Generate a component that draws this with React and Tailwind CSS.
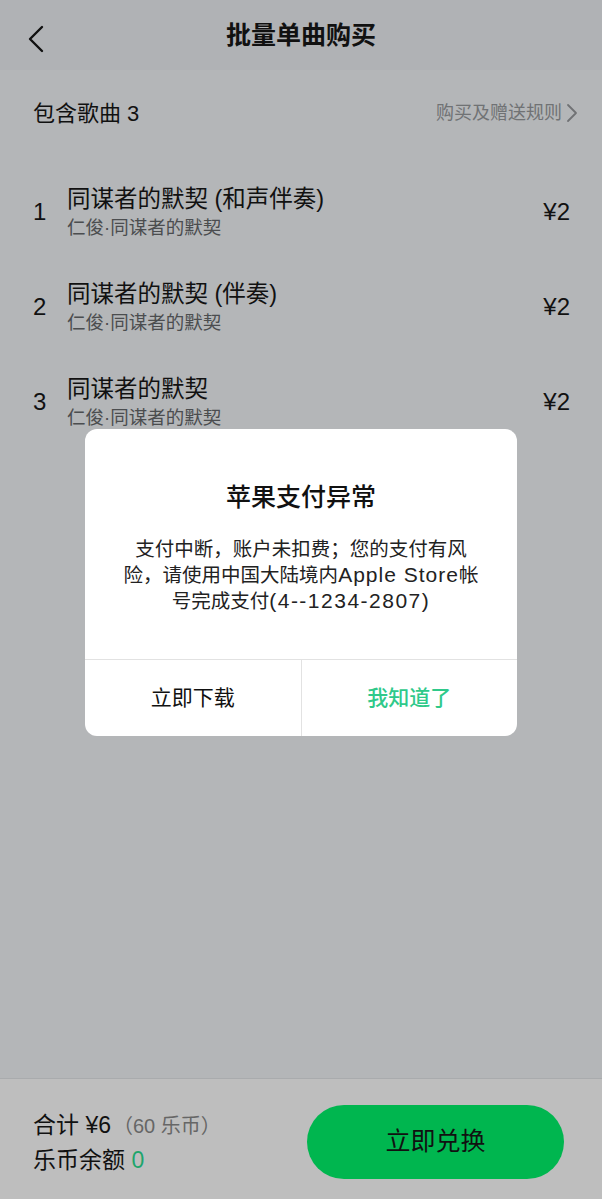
const font = { fontFamily: '"Liberation Sans", "Noto Sans CJK SC", sans-serif' }

const songs = [
  { no: 1, title: '同谋者的默契 (和声伴奏)', sub: '仁俊·同谋者的默契' },
  { no: 2, title: '同谋者的默契 (伴奏)', sub: '仁俊·同谋者的默契' },
  { no: 3, title: '同谋者的默契', sub: '仁俊·同谋者的默契' },
]

function SongRow({ song }) {
  return (
    <div className="flex h-[95px] items-center pl-[33px] pr-[32px]">
      <div className="w-[34px] text-[24px] leading-none text-[#111]">{song.no}</div>
      <div className="flex flex-1 flex-col">
        <div className="text-[23.5px] leading-[30px] text-[#111]">{song.title}</div>
        <div className="mt-[2px] text-[18.5px] leading-[24px] text-[#4b4d4f]">{song.sub}</div>
      </div>
      <div className="text-[24px] leading-none text-[#111]">¥2</div>
    </div>
  )
}

export default function App() {
  return (
    <div style={font} className="relative flex h-[1199px] w-[602px] flex-col overflow-hidden bg-[#b4b6b8]">
      <header className="relative flex h-[70px] items-center justify-center bg-[#b0b2b5]">
        <svg className="absolute left-[27px] top-[25px]" width="18" height="28" viewBox="0 0 18 28" fill="none">
          <path d="M15 2 L3 14 L15 26" stroke="#111" strokeWidth="2.4" strokeLinecap="round" strokeLinejoin="round" />
        </svg>
        <h1 className="text-[25px] font-bold leading-none text-[#111]">批量单曲购买</h1>
      </header>

      <main className="flex-1">
        <div className="flex h-[86px] items-center justify-between pl-[33px] pr-[24px]">
          <div className="text-[22px] text-[#111]">包含歌曲 3</div>
          <div className="flex items-center gap-[4px] text-[18px] text-[#707274]">
            购买及赠送规则
            <svg width="12" height="20" viewBox="0 0 12 20" fill="none">
              <path d="M2 2 L10 10 L2 18" stroke="#707274" strokeWidth="1.8" strokeLinecap="round" strokeLinejoin="round" />
            </svg>
          </div>
        </div>
        <div className="mt-[8px]">
          {songs.map((s) => (
            <SongRow key={s.no} song={s} />
          ))}
        </div>
      </main>

      <footer className="flex h-[121px] items-center justify-between border-t border-[#a9abad] bg-[#bebebe] pl-[33px] pr-[38px] pt-[6px]">
        <div className="flex flex-col gap-[4px]">
          <div className="flex items-baseline text-[23px] leading-[30px] text-[#111]">
            合计 ¥6
            <span className="ml-[2px] text-[20px] text-[#666]">（60 乐币）</span>
          </div>
          <div className="text-[23px] leading-[30px] text-[#111]">
            乐币余额 <span className="text-[#1ea56c]">0</span>
          </div>
        </div>
        <button className="flex h-[74px] w-[257px] items-center justify-center rounded-full bg-[#00b64f] text-[25px] text-[#111]">
          立即兑换
        </button>
      </footer>

      <div className="absolute left-[85px] top-[429px] w-[432px] overflow-hidden rounded-[12px] bg-white">
        <div className="flex h-[230px] flex-col items-center pt-[52px]">
          <div className="text-[25px] font-medium leading-[32px] text-[#111]">苹果支付异常</div>
          <p className="mt-[23px] text-center text-[19.5px] leading-[26px] text-[#222]">
            支付中断，账户未扣费；您的支付有风
            <br />
            险，请使用中国大陆境内<span className="text-[21px] tracking-[1px]">Apple Store</span>帐
            <br />
            号完成支付<span className="text-[21px] tracking-[1.5px]">(4--1234-2807)</span>
          </p>
        </div>
        <div className="flex h-[77px] border-t border-[#e2e2e2]">
          <button className="flex-1 text-[21px] text-[#111]">立即下载</button>
          <div className="w-px bg-[#e2e2e2]" />
          <button className="flex-1 text-[21px] font-medium text-[#2fc98a]">我知道了</button>
        </div>
      </div>
    </div>
  )
}
